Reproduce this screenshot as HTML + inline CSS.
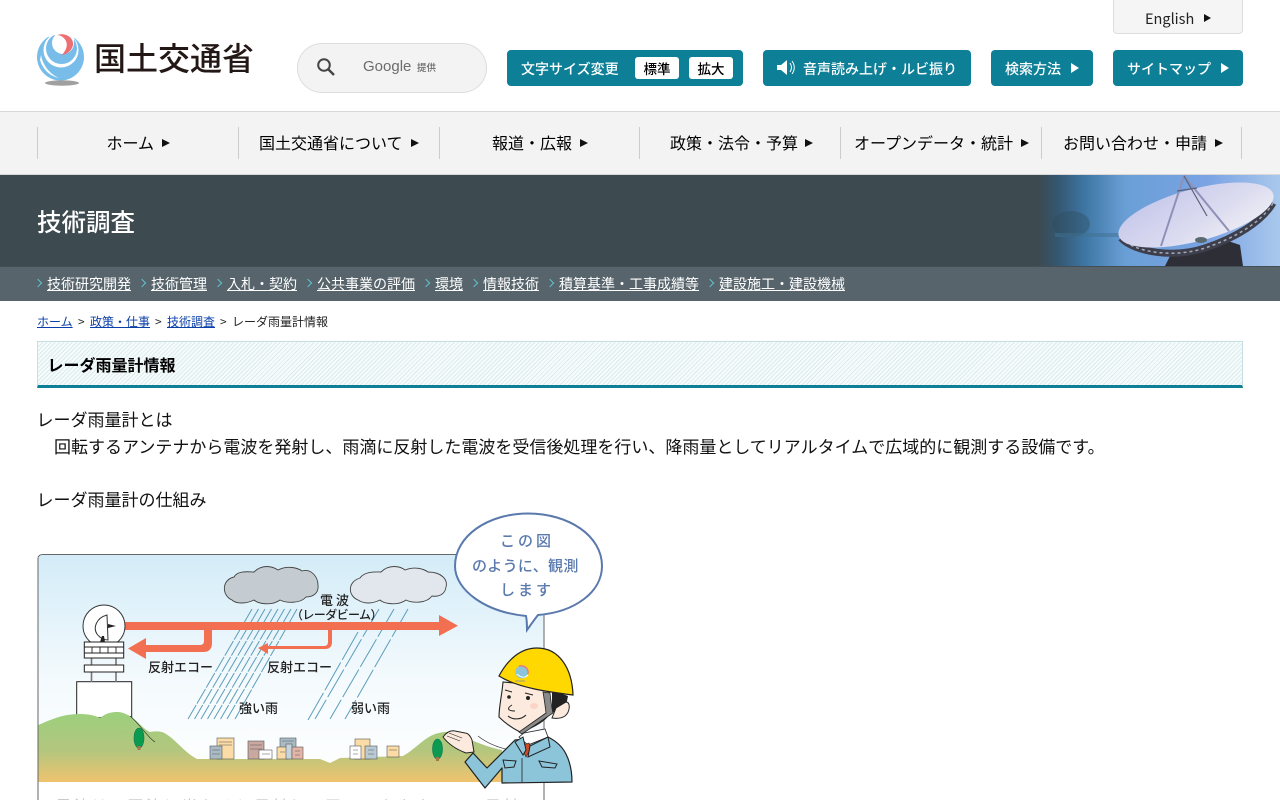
<!DOCTYPE html>
<html lang="ja"><head><meta charset="utf-8"><title>レーダ雨量計情報</title>
<style>
html,body{margin:0;padding:0;background:#fff;width:1280px;height:800px;overflow:hidden}
#p{width:1280px;height:800px;overflow:hidden;position:relative;font-family:"Noto Sans CJK JP","Liberation Sans",sans-serif;color:#000}
.a,.t{position:absolute}
.t{white-space:nowrap;line-height:1}
.b{position:absolute;background:#0d7f97;border-radius:4px;top:50px;height:36px}
.w{color:#fff;font-size:14px;font-weight:500}
.n{font-size:16px;color:#000;top:134px}
.sep{position:absolute;top:127px;width:1px;height:32px;background:#ccc}
.tri{position:absolute;width:0;height:0;border-style:solid;border-color:transparent;border-width:4.5px 0 4.5px 8px;border-left-color:#111}
.triw{border-left-color:#fff;border-width:5px 0 5px 8px}
.s{top:277px;font-size:14px;color:#fff;text-decoration:underline}
.gt{position:absolute;top:280px;width:5px;height:5px;border-top:1.5px solid #5fc0d0;border-right:1.5px solid #5fc0d0;transform:rotate(45deg)}
.c{top:315.500px;font-size:12px;color:#222}
.c.l{color:#0b3fa8;text-decoration:underline}
.p{font-size:17px;color:#111}
svg{position:absolute;left:0;top:0}
</style></head><body><div id="p">

<svg width="1280" height="800" viewBox="0 0 1280 800" style="z-index:0">
<defs>
<linearGradient id="sky" x1="0" y1="0" x2="0" y2="1"><stop offset="0" stop-color="#d3ecf8"/><stop offset=".55" stop-color="#f4fafd"/><stop offset="1" stop-color="#fff"/></linearGradient>
<linearGradient id="gnd" x1="0" y1="712" x2="0" y2="782" gradientUnits="userSpaceOnUse"><stop offset="0" stop-color="#9bd07d"/><stop offset=".55" stop-color="#b3c67e"/><stop offset="1" stop-color="#efc46f"/></linearGradient>
<linearGradient id="hero" x1="1038" y1="0" x2="1280" y2="0" gradientUnits="userSpaceOnUse"><stop offset="0" stop-color="#3d4a50"/><stop offset=".08" stop-color="#34566f"/><stop offset=".2" stop-color="#3f78a6"/><stop offset=".36" stop-color="#6a9fd6"/><stop offset=".7" stop-color="#7aa3e4"/><stop offset="1" stop-color="#a9c8ec"/></linearGradient>
<linearGradient id="dish" x1="0" y1="0" x2="1" y2="1"><stop offset="0" stop-color="#c3c5ea"/><stop offset=".6" stop-color="#dcdcf0"/><stop offset="1" stop-color="#f2f2f7"/></linearGradient>
<clipPath id="hc"><rect x="1030" y="175" width="250" height="91"/></clipPath>
</defs>

<!-- logo mark -->
<circle cx="60.5" cy="57" r="23.5" fill="#78bdea"/>
<circle cx="61" cy="50" r="17.500" fill="#fff"/>
<circle cx="61.5" cy="48.500" r="15.500" fill="#78bdea"/>
<circle cx="63" cy="43" r="11" fill="#fff"/>
<path d="M49,30 H74 V41 C70,37 62,34 56,35 C53,35 51,37 49,39Z" fill="#fff"/>
<path d="M41,55 C43,66 50,74 59,78 C50,76 43,70 40,60Z" fill="#fff"/>
<path d="M57,35 C66,32 74,38 73,45 C72,50 68,54 62,55 C66,50 68,46 66,41 C64,37 60,35 57,35Z" fill="#ee6f72"/>
<ellipse cx="62" cy="83" rx="17" ry="2.700" fill="#a0a0a0"/>

<!-- hero -->
<rect x="0" y="175" width="1280" height="91" fill="#3d4a50"/>
<rect x="1038" y="175" width="242" height="91" fill="url(#hero)"/>
<g clip-path="url(#hc)">
<ellipse cx="1071" cy="224" rx="19" ry="13" fill="#2f4a5c" opacity=".4"/>
<rect x="1055" y="233" width="65" height="4" fill="#3f6f90" opacity=".5"/>
<path d="M1165,266 L1170,256 L1225,240 L1240,245 L1243,266Z" fill="#2d2e36"/>
<path d="M1121,238 C1135,253 1175,258 1205,248 C1235,238 1262,222 1273,203" fill="none" stroke="#3d3f4c" stroke-width="7"/>
<path d="M1121,238 C1135,253 1175,258 1205,248 C1235,238 1262,222 1273,203" fill="none" stroke="#a7abb8" stroke-width="1.500" stroke-dasharray="3 3"/>
<ellipse cx="1196" cy="215" rx="80" ry="26" transform="rotate(-15 1196 215)" fill="url(#dish)"/>
<path d="M1161,246 L1184,176 L1229,231" fill="none" stroke="#8e90b8" stroke-width="2"/>
<path d="M1184,176 L1207,216 M1177,191 L1197,188" stroke="#5c5f78" stroke-width="1.200" fill="none"/>
<ellipse cx="1201" cy="240" rx="6" ry="3" fill="#5a6a70"/>
</g>
<rect x="0" y="266" width="1280" height="35" fill="#57646b"/>
<rect x="0" y="266" width="1280" height="1" fill="#444f55"/>

<!-- illustration frame -->
<path d="M38,800 L38,559 Q38,554.5 43,554.5 L544,554.5 L544,800" fill="#fff" stroke="#666" stroke-width="1"/>
<path d="M38.5,782 L38.5,559 Q38.5,555 43,555 L543.5,555 L543.5,782Z" fill="url(#sky)"/>
<!-- clouds -->
<path d="M232,600 C222,596 221,580 234,577 C238,570 250,572 254,572 C262,564 272,566 278,570 C288,565 298,568 302,571 C312,568 318,578 318,585 C319,594 312,597 306,597 C300,604 286,603 280,600 C272,606 258,604 254,600 C246,604 236,604 232,600Z" fill="#c4ccd2" stroke="#444" stroke-width=".9"/>
<path d="M358,600 C348,596 347,582 360,578 C365,571 376,572 381,572 C389,564 400,566 405,570 C415,566 424,569 428,572 C442,572 448,580 446,587 C445,595 438,597 432,596 C426,604 412,603 406,600 C398,606 384,604 380,600 C372,604 364,604 358,600Z" fill="#e1e7ec" stroke="#444" stroke-width=".9"/>
<!-- rain -->
<g stroke="#5c9dba" stroke-width="1" fill="none" stroke-dasharray="17 1.500">
<path d="M252,609 l-64,110 M258.500,609 l-64,110 M265,609 l-64,110 M271.500,609 l-64,110 M278,609 l-64,110 M284.500,609 l-64,110 M291,609 l-64,110 M297,609 l-62,110"/>
</g>
<g stroke="#5c9dba" stroke-width="1" fill="none" stroke-dasharray="32 3">
<path d="M379,609 l-64,110 M394,609 l-64,110 M408,609 l-63,110 M358,632 l-50,88"/>
</g>
<!-- arrows -->
<path d="M125,622 H439 V615 L458,625.7 L439,636 V630 H125Z" fill="#f26f51"/>
<path d="M204,630 H212 V643 Q212,652 203,652 H146 V659 L128,648.5 L146,638 V645 H200 Q204,645 204,641Z" fill="#f26f51"/>
<path d="M328,630 H332 V642 Q332,649 325,649 H268 V654 L258,648 L268,643 V646 H324 Q328,646 328,642Z" fill="#f26f51"/>
<!-- tower -->
<rect x="76.7" y="681.7" width="55" height="36" fill="#fff" stroke="#222" stroke-width="1"/>
<path d="M91.5,658 V682 M116,658 V682" stroke="#777" stroke-width="1.6"/>
<circle cx="104" cy="626" r="21" fill="#fff" stroke="#333" stroke-width="1"/>
<path d="M107,615 C96,618 93,628 97,634 C100,638 104,640 108,640Z" fill="#fff" stroke="#333" stroke-width="1"/>
<path d="M108,624 L116,626 L108,628Z" fill="#222"/>
<path d="M100,642 L102,636 L104,636 L105,642Z" fill="#222"/>
<rect x="84.3" y="642" width="39.4" height="16" fill="#fff" stroke="#222" stroke-width="1"/>
<path d="M84.3,647 H123.7 M84.3,653 H123.7 M92,647 V653 M100,647 V653 M108,647 V653 M116,647 V653" stroke="#222" stroke-width=".9"/>
<rect x="84.3" y="665" width="39.4" height="7" fill="#fff" stroke="#222" stroke-width="1"/>
<!-- ground -->
<path d="M38.5,725 C50,720 62,714 80,714 C90,714 96,716 100,718 C106,713 112,712 117,712 C124,712 130,716 134,719 C140,724 145,730 150,732 C156,731 162,731 166,734 C176,740 184,752 197,759 L320,759 L330,763 L340,758 L403,756 C414,750 424,738 435,734 C445,731 452,731 460,735 C470,740 490,748 502,750 L502,782 L38.5,782Z" fill="url(#gnd)"/>
<path d="M130,716 C138,722 148,738 155,742" fill="none" stroke="#333" stroke-width=".7"/>
<path d="M478,736 C488,744 500,748 510,750" fill="none" stroke="#333" stroke-width=".7"/>
<!-- trees -->
<ellipse cx="139" cy="738" rx="5" ry="10" fill="#0a9a50" stroke="#175" stroke-width=".6"/><rect x="137.5" y="746" width="3" height="4" fill="#a5764a"/>
<ellipse cx="437.500" cy="749" rx="5" ry="10" fill="#0a9a50" stroke="#175" stroke-width=".6"/><rect x="436" y="757" width="3" height="4" fill="#a5764a"/>
<!-- buildings -->
<g stroke="#555" stroke-width=".6">
<rect x="217" y="738" width="17" height="21" fill="#fbdca6"/><rect x="210" y="746" width="12" height="13" fill="#a9bcc6"/>
<rect x="248" y="741" width="16" height="18" fill="#c9a8a0"/><rect x="259" y="750" width="13" height="9" fill="#fff"/>
<rect x="280" y="738" width="16" height="12" fill="#a9bcc6"/><rect x="277" y="747" width="11" height="12" fill="#fbdca6"/><rect x="286" y="744" width="6" height="15" fill="#c6d4dc"/><rect x="292" y="747" width="11" height="12" fill="#e3b5a8"/>
<rect x="355" y="739" width="15" height="20" fill="#fbdca6"/><rect x="350" y="746" width="11" height="13" fill="#fff"/><rect x="365" y="746" width="12" height="13" fill="#b9cad3"/>
<rect x="387" y="746" width="12" height="11" fill="#fbdca6"/>
</g>
<g fill="none" stroke="#555" stroke-width=".6"><path d="M219,742 H232 M219,745 H232 M212,750 H220 M212,754 H220 M250,745 H262 M250,749 H262 M282,741 H294 M262,754 H270 M353,750 H358 M353,754 H358 M368,750 H374 M368,754 H374 M389,750 H397 M280,752 H285 M295,751 H300 M295,755 H300"/></g>

<!-- speech bubble -->
<path d="M527,630 C530,626 534,620 538,615 C575,612 602,592 602,566 C602,536 569,513.500 528,513.500 C488,513.500 455,536 455,566 C455,590 485,612 526,616 C527,621 527,626 527,630Z" fill="#fff" stroke="#5a79ad" stroke-width="2"/>

<!-- person -->
<path d="M515,740 L487,768 L473,753 L465,762 L485,788 L502,768 L502,783 L572,782 C572,770 570,762 566,754 C562,746 556,741 548,737Z" fill="#8cc5da" stroke="#222" stroke-width="1.200" stroke-linejoin="round"/>
<path d="M443,737 C446,733 450,730 455,731 L465,733 C468,733 470,735 472,740 L474,752 L466,753 C458,750 449,745 443,737Z" fill="#fbeadd" stroke="#222" stroke-width="1"/>
<path d="M447,736 L460,741 M449,733 L462,738" stroke="#222" stroke-width=".6"/>
<path d="M519,737 L524,733 L545,729 L548,737 L528,745Z" fill="#fff" stroke="#222" stroke-width=".8"/>
<path d="M523,745 L529,743 L531,748 L526,757 L523,751Z" fill="#cf4a27" stroke="#222" stroke-width=".6"/>
<path d="M515,742 L523,737 L526,750 L523,755Z M548,737 L550,747 L528,757 L530,746Z" fill="#8cc5da" stroke="#222" stroke-width="1"/>
<path d="M503,760 L516,761 L514,767 L505,768Z M539,761 L557,764 L555,768 L542,767Z" fill="#8cc5da" stroke="#222" stroke-width="1"/>
<path d="M522,758 V782" stroke="#222" stroke-width=".8"/>
<path d="M552,690 L568,696 L566,706 L552,713Z" fill="#222"/>
<path d="M566,702 C571,702 570,712 565,716 C562,718 558,719 552,718 L556,708Z" fill="#fbeadd" stroke="#222" stroke-width="1"/>
<path d="M503,682 C502,695 499,706 499,717 C506,724 514,729 520,732 C530,729 542,723 548,716 C550,708 550,698 548,686Z" fill="#fbeadd" stroke="#222" stroke-width="1.100"/>
<path d="M543,692 L550,693 C551,703 552,709 553,713 L522,734 L519,732 L546,713 C545,704 544,698 543,692Z" fill="#8a8a8a" stroke="#222" stroke-width=".8"/>
<path d="M499,676 C508,659 521,648 537,648 C559,648 572,668 573,695 C549,692 518,688 499,676Z" fill="#ffd800" stroke="#222" stroke-width="1.200"/>
<circle cx="522" cy="672" r="6.500" fill="#8cc5da"/><path d="M519,666 C525,665 529,669 528,674" fill="none" stroke="#e77" stroke-width="1.400"/><path d="M517,674 C521,678 525,678 528,675" fill="none" stroke="#fff" stroke-width="1"/><path d="M515,681 H525" stroke="#999" stroke-width="1"/>
<circle cx="528" cy="698" r="2" fill="#222"/><circle cx="509" cy="697" r="1.800" fill="#222"/>
<path d="M525,693 L533,695 M505,690 L512,692" stroke="#222" stroke-width="1"/>
<path d="M512,705 C507,708 507,711 515,711" fill="none" stroke="#222" stroke-width="1"/>
<path d="M508,716 C513,720 521,720 526,715" fill="none" stroke="#222" stroke-width="1.100"/>
<ellipse cx="534" cy="706" rx="4" ry="3" fill="#fbd4c6"/>
</svg>

<!-- logo text -->
<div class="t" style="left:94px;top:41px;font-size:32px;font-weight:500;color:#231815">国土交通省</div>

<!-- search -->
<div class="a" style="left:297px;top:43px;width:188px;height:48px;border:1px solid #ddd;border-radius:25px;background:#f3f3f3"></div>
<svg width="20" height="20" style="left:316px;top:57px"><circle cx="8" cy="8" r="5.800" fill="none" stroke="#444" stroke-width="2"/><path d="M12.500,12.500 L18,18" stroke="#444" stroke-width="2.400"/></svg>
<div class="t" style="left:363px;top:59px;font-size:15px;color:#6b6b6b;font-family:'Liberation Sans',sans-serif">Google</div>
<div class="t" style="left:417px;top:63px;font-size:9.500px;color:#666;font-weight:500">提供</div>

<!-- english -->
<div class="a" style="left:1113px;top:-2px;width:128px;height:34px;background:#f5f5f5;border:1px solid #ddd;border-radius:0 0 4px 4px"></div>
<div class="t" style="left:1145px;top:12px;font-size:14.500px;color:#222">English</div>
<div class="tri" style="left:1204px;top:14px;border-width:4px 0 4px 7px"></div>

<!-- buttons -->
<div class="b" style="left:507px;width:236px"></div>
<div class="t w" style="left:521px;top:62px">文字サイズ変更</div>
<div class="a" style="left:635px;top:57px;width:44px;height:22px;background:#fff;border-radius:3px"></div>
<div class="t" style="left:643.500px;top:61.500px;font-size:13.500px;font-weight:500">標準</div>
<div class="a" style="left:689px;top:57px;width:44px;height:22px;background:#fff;border-radius:3px"></div>
<div class="t" style="left:697.500px;top:61.500px;font-size:13.500px;font-weight:500">拡大</div>

<div class="b" style="left:763px;width:208px"></div>
<svg width="20" height="18" style="left:776px;top:59px"><path d="M1,6 H5 L11,1 V16 L5,11 H1Z" fill="#fff"/><path d="M14,4 C16,7 16,10 14,13 M16,2 C19,6 19,11 16,15" fill="none" stroke="#fff" stroke-width="1"/></svg>
<div class="t w" style="left:803px;top:62px">音声読み上げ・ルビ振り</div>

<div class="b" style="left:991px;width:102px"></div>
<div class="t w" style="left:1005px;top:62px">検索方法</div>
<div class="tri triw" style="left:1071px;top:63px"></div>

<div class="b" style="left:1113px;width:130px"></div>
<div class="t w" style="left:1127px;top:62px">サイトマップ</div>
<div class="tri triw" style="left:1221px;top:63px"></div>

<!-- nav -->
<div class="a" style="left:0;top:111px;width:1280px;height:64px;background:#f3f3f3;border-top:1px solid #d8d8d8;box-sizing:border-box;border-bottom:1px solid #d8d8d8"></div>
<div class="sep" style="left:37px"></div><div class="sep" style="left:238px"></div><div class="sep" style="left:439px"></div><div class="sep" style="left:639px"></div><div class="sep" style="left:840px"></div><div class="sep" style="left:1041px"></div><div class="sep" style="left:1241px"></div>
<div class="t n" style="left:106.500px">ホーム</div><div class="tri" style="left:162px;top:139px"></div>
<div class="t n" style="left:259px">国土交通省について</div><div class="tri" style="left:411px;top:139px"></div>
<div class="t n" style="left:492px">報道・広報</div><div class="tri" style="left:580px;top:139px"></div>
<div class="t n" style="left:670px">政策・法令・予算</div><div class="tri" style="left:805px;top:139px"></div>
<div class="t n" style="left:854px">オープンデータ・統計</div><div class="tri" style="left:1021px;top:139px"></div>
<div class="t n" style="left:1063px">お問い合わせ・申請</div><div class="tri" style="left:1215px;top:139px"></div>

<!-- hero title -->
<div class="t" style="left:37px;top:209.500px;font-size:24.500px;color:#fff;font-weight:500">技術調査</div>

<!-- subnav -->
<div class="gt" style="left:35px"></div><div class="t s" style="left:47px">技術研究開発</div>
<div class="gt" style="left:139px"></div><div class="t s" style="left:151px">技術管理</div>
<div class="gt" style="left:215px"></div><div class="t s" style="left:227px">入札・契約</div>
<div class="gt" style="left:305px"></div><div class="t s" style="left:317px">公共事業の評価</div>
<div class="gt" style="left:423px"></div><div class="t s" style="left:435px">環境</div>
<div class="gt" style="left:471px"></div><div class="t s" style="left:483px">情報技術</div>
<div class="gt" style="left:547px"></div><div class="t s" style="left:559px">積算基準・工事成績等</div>
<div class="gt" style="left:707px"></div><div class="t s" style="left:719px">建設施工・建設機械</div>

<!-- crumbs -->
<div class="t c l" style="left:37px">ホーム</div><div class="t c" style="left:78px">&gt;</div>
<div class="t c l" style="left:90px">政策・仕事</div><div class="t c" style="left:155px">&gt;</div>
<div class="t c l" style="left:167px">技術調査</div><div class="t c" style="left:220px">&gt;</div>
<div class="t c" style="left:232px">レーダ雨量計情報</div>

<!-- heading -->
<div class="a" style="left:37px;top:341px;width:1206px;height:47px;box-sizing:border-box;border:1px solid #c8dfe3;border-bottom:3px solid #0d7f97;background:repeating-linear-gradient(135deg,#dcecee 0,#dcecee 1px,#f6fbfb 1px,#f6fbfb 3px)"></div>
<div class="t" style="left:47.500px;top:356px;font-size:16px;font-weight:700">レーダ雨量計情報</div>

<!-- body -->
<div class="t p" style="left:36.500px;top:409.500px">レーダ雨量計とは</div>
<div class="t p" style="left:54px;top:436.500px">回転するアンテナから電波を発射し、雨滴に反射した電波を受信後処理を行い、降雨量としてリアルタイムで広域的に観測する設備です。</div>
<div class="t p" style="left:36.500px;top:489.500px">レーダ雨量計の仕組み</div>

<!-- illustration text -->
<div class="t" style="left:320px;top:593px;font-size:13px;font-weight:500;letter-spacing:3px;color:#222">電波</div>
<div class="t" style="left:291px;top:609px;font-size:12px;font-weight:500;color:#222;letter-spacing:-.6px">（レーダビーム）</div>
<div class="t" style="left:148px;top:660px;font-size:13px;font-weight:500;color:#222">反射エコー</div>
<div class="t" style="left:267px;top:660px;font-size:13px;font-weight:500;color:#222">反射エコー</div>
<div class="t" style="left:239px;top:701px;font-size:13px;font-weight:500;color:#222">強い雨</div>
<div class="t" style="left:351px;top:701px;font-size:13px;font-weight:500;color:#222">弱い雨</div>
<div class="t" style="left:500px;top:533px;font-size:15px;color:#5a79ad;letter-spacing:3px;font-weight:500">この図</div>
<div class="t" style="left:472px;top:558px;font-size:15px;color:#5a79ad;font-weight:500;letter-spacing:.3px">のように、観測</div>
<div class="t" style="left:500px;top:582px;font-size:15px;color:#5a79ad;letter-spacing:3px;font-weight:500">します</div>
<div class="t" style="left:56px;top:798px;font-size:15px;color:#c4c4c4;letter-spacing:3px">電波は、雨滴に当たると反射して戻ってきます。この反射</div>
</div></body></html>
